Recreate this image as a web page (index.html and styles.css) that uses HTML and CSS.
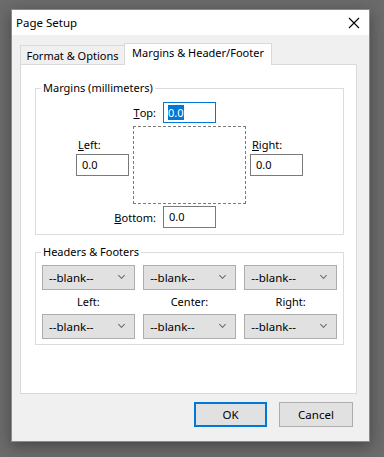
FILE: index.html
```html
<!DOCTYPE html>
<html lang="en">
<head>
    <meta charset="UTF-8">
    <title>Page Setup</title>
    <link rel="stylesheet" href="styles.css">
</head>
<body>
    <div class="window">
        <div class="titlebar">
            <span class="title">Page Setup</span>
            <svg class="close" width="12" height="12" viewBox="0 0 12 12">
                <path d="M1 1 L11 11 M11 1 L1 11" stroke="#000" stroke-width="1.1" fill="none"/>
            </svg>
        </div>

        <div class="content">
            <!-- Tabs -->
            <div class="tabs">
                <div class="tab">Format &amp; Options</div>
                <div class="tab active">Margins &amp; Header/Footer</div>
            </div>

            <div class="panel">
                <fieldset class="group margins">
                    <legend>Margins (millimeters)</legend>
                    <div class="margin-grid">
                        <div class="top-cell">
                            <label class="lbl-side"><u>T</u>op:</label>
                            <div class="field focused"><span class="sel">0.0</span></div>
                        </div>
                        <div class="side-cell left">
                            <label><u>L</u>eft:</label>
                            <div class="field">0.0</div>
                        </div>
                        <div class="page-box"></div>
                        <div class="side-cell right">
                            <label><u>R</u>ight:</label>
                            <div class="field">0.0</div>
                        </div>
                        <div class="bottom-cell">
                            <label class="lbl-side"><u>B</u>ottom:</label>
                            <div class="field">0.0</div>
                        </div>
                    </div>
                </fieldset>

                <fieldset class="group headers">
                    <legend>Headers &amp; Footers</legend>
                    <div class="hf-grid">
                        <div class="select">--blank--<span class="chev"></span></div>
                        <div class="select">--blank--<span class="chev"></span></div>
                        <div class="select">--blank--<span class="chev"></span></div>
                        <div class="hf-label">Left:</div>
                        <div class="hf-label">Center:</div>
                        <div class="hf-label">Right:</div>
                        <div class="select">--blank--<span class="chev"></span></div>
                        <div class="select">--blank--<span class="chev"></span></div>
                        <div class="select">--blank--<span class="chev"></span></div>
                    </div>
                </fieldset>
            </div>

            <div class="buttons">
                <button class="btn default">OK</button>
                <button class="btn">Cancel</button>
            </div>
        </div>
    </div>
</body>
</html>
```

FILE: styles.css
```css
* {
    box-sizing: border-box;
    margin: 0;
    padding: 0;
}

body {
    background: #6b6b6b;
    font-family: 'Noto Sans', 'DejaVu Sans', sans-serif;
    font-size: 11px;
    color: #000;
    padding: 9px 0 0 11px;
    height: 457px;
    overflow: hidden;
}

.window {
    width: 359px;
    height: 433px;
    background: #f0f0f0;
    border: 1px solid #8a8a8a;
    box-shadow: 0 4px 14px rgba(0, 0, 0, 0.35);
}

.titlebar {
    height: 25px;
    background: #fff;
    display: flex;
    align-items: center;
    justify-content: space-between;
    padding: 0 9px 0 4px;
}

.title {
    font-size: 11.5px;
}

.content {
    padding: 8px 12px 0 8px;
}

/* tabs */
.tabs {
    display: flex;
    align-items: flex-end;
    height: 21px;
}

.tab {
    height: 19px;
    line-height: 19px;
    width: 104px;
    border: 1px solid #d9d9d9;
    border-bottom: none;
    border-right: none;
    text-align: center;
    white-space: nowrap;
}

.tab.active {
    width: 148px;
    height: 22px;
    background: #fff;
    border-right: 1px solid #d9d9d9;
    margin-bottom: -1px;
    position: relative;
    line-height: 18px;
}

.panel {
    height: 330px;
    background: #fff;
    border: 1px solid #d9d9d9;
    padding: 15px 12px 0 14px;
}

/* group boxes */
.group {
    border: 1px solid #dcdcdc;
    padding: 0 6px 0 6px;
}

.group legend {
    margin-left: -1px;
    padding: 0 2px;
    line-height: 16px;
}

.margins {
    height: 155px;
}

.margin-grid {
    display: grid;
    grid-template-columns: 53px 113px 53px;
    grid-template-rows: 21px 78px 22px;
    column-gap: 4px;
    row-gap: 3px;
    margin: 6px 0 0 34px;
}

.top-cell,
.bottom-cell {
    grid-column: 2;
    display: grid;
    grid-template-columns: minmax(0, 1fr) 53px minmax(0, 1fr);
}

.top-cell {
    grid-row: 1;
}

.bottom-cell {
    grid-row: 3;
    margin-top: -1px;
}

.lbl-side {
    display: flex;
    justify-content: flex-end;
    padding-right: 7px;
    align-self: center;
    white-space: nowrap;
}

.side-cell {
    grid-row: 2;
    display: grid;
    grid-template-rows: 1fr auto 1fr;
}

.side-cell.left {
    grid-column: 1;
}

.side-cell.right {
    grid-column: 3;
}

.page-box {
    grid-row: 2;
    grid-column: 2;
    border: 1px dashed #7a7a7a;
}

.side-cell label {
    align-self: end;
    margin-bottom: 2px;
    padding-left: 2px;
}

.side-cell .field {
    grid-row: 2;
}

.field {
    height: 22px;
    width: 53px;
    border: 1px solid #7a7a7a;
    background: #fff;
    padding: 0 0 0 5px;
    line-height: 20px;
}

.field.focused {
    height: 21px;
    border-color: #0078d7;
    padding-left: 4px;
    line-height: 19px;
}

.sel {
    background: #0078d7;
    color: #fff;
}

.headers {
    margin-top: 9px;
    height: 101px;
    padding: 0 6px;
}

.hf-grid {
    display: grid;
    grid-template-columns: repeat(3, 1fr);
    grid-template-rows: 25px 24px 25px;
    column-gap: 8.5px;
    margin-top: 5px;
}

.select {
    position: relative;
    background: #e1e1e1;
    border: 1px solid #adadad;
    padding-left: 6px;
    line-height: 23px;
    font-size: 11.5px;
}

.chev {
    position: absolute;
    right: 10px;
    top: 7px;
    width: 5px;
    height: 5px;
    border-right: 1px solid #6a6a6a;
    border-bottom: 1px solid #6a6a6a;
    transform: rotate(45deg);
}

.hf-label {
    text-align: center;
    line-height: 24px;
}

/* buttons */
.buttons {
    display: flex;
    justify-content: flex-end;
    gap: 12px;
    padding: 8px 4px 0 0;
}

.btn {
    font-family: inherit;
    font-size: 11.5px;
    width: 74px;
    height: 25px;
    background: #e1e1e1;
    border: 1px solid #adadad;
    color: #000;
}

.btn.default {
    width: 73px;
    border: 2px solid #0078d7;
}
```
